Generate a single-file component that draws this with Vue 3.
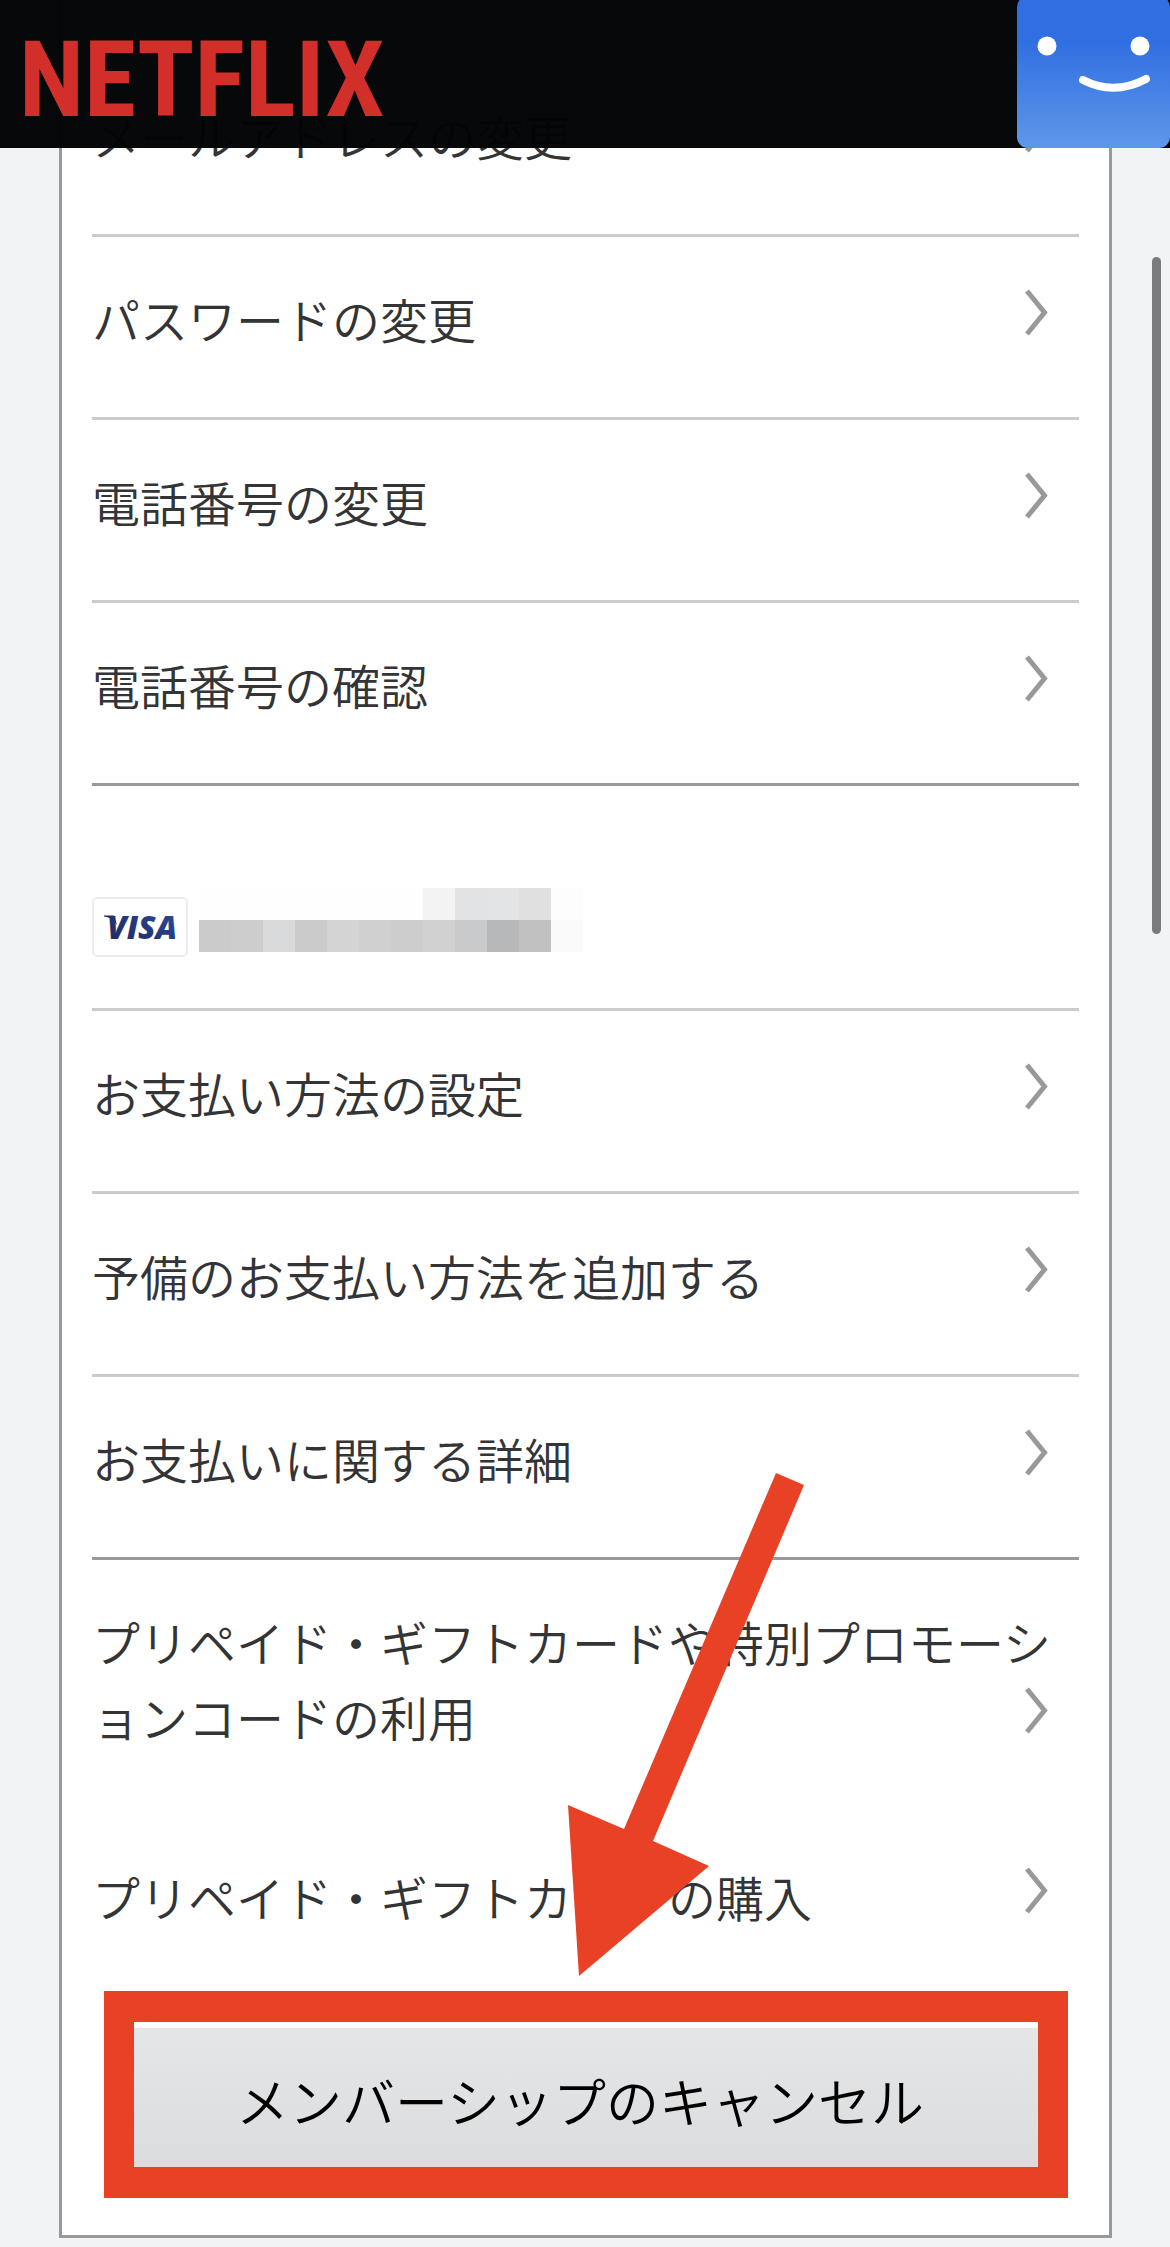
<template>
  <div class="page">
    <header class="header">
      <a href="#" class="logo">NETFLIX</a>
      <button type="button" class="avatar" aria-label="プロフィール">
        <svg viewBox="0 0 153 148" aria-hidden="true">
          <defs>
            <linearGradient id="avatar-fill" x1="0" y1="0" x2="0" y2="1">
              <stop offset="0.3" stop-color="#306fe1" />
              <stop offset="1" stop-color="#5f97e9" />
            </linearGradient>
          </defs>
          <rect y="-4" width="153" height="152" rx="11" fill="url(#avatar-fill)" />
          <circle cx="30" cy="46" r="9.5" fill="#fff" />
          <circle cx="123" cy="46" r="9.5" fill="#fff" />
          <path d="M66 80 Q97 96 129 79" fill="none" stroke="#fff" stroke-width="8" stroke-linecap="round" />
        </svg>
      </button>
    </header>

    <main class="card">
      <ul class="group">
        <li v-for="item in accountLinks" :key="item" class="row">
          <a href="#" class="row-link">
            <span>{{ item }}</span>
            <svg class="chevron" viewBox="0 0 23 47" aria-hidden="true">
              <path d="M2 2 L19.500 23.500 L2 45" />
            </svg>
          </a>
        </li>
      </ul>

      <div class="payment">
        <svg class="visa" viewBox="0 0 96 60" role="img" aria-label="VISA">
          <defs>
            <linearGradient id="visa-fill" x1="0" y1="1" x2="1" y2="0">
              <stop offset="0" stop-color="#20255b" />
              <stop offset="1" stop-color="#2a4e9c" />
            </linearGradient>
          </defs>
          <rect x="1" y="1" width="94" height="58" rx="4" fill="#fff" stroke="#e6e6e8" stroke-width="1.500" />
          <path d="M12 18.500 H22 L25 28 Q20 20 12 19.500 Z" fill="#20255b" />
          <text x="50" y="42" class="visa-text" text-anchor="middle" fill="url(#visa-fill)">VISA</text>
        </svg>
        <div class="mosaic">
          <span
            v-for="(color, index) in mosaic"
            :key="index"
            :style="{ backgroundColor: color }"
          ></span>
        </div>
      </div>

      <ul class="group">
        <li v-for="item in paymentLinks" :key="item" class="row">
          <a href="#" class="row-link">
            <span>{{ item }}</span>
            <svg class="chevron" viewBox="0 0 23 47" aria-hidden="true">
              <path d="M2 2 L19.500 23.500 L2 45" />
            </svg>
          </a>
        </li>
      </ul>

      <ul class="group plain">
        <li v-for="item in giftLinks" :key="item" class="row">
          <a href="#" class="row-link">
            <span>{{ item }}</span>
            <svg class="chevron" viewBox="0 0 23 47" aria-hidden="true">
              <path d="M2 2 L19.500 23.500 L2 45" />
            </svg>
          </a>
        </li>
      </ul>

      <div class="highlight">
        <button type="button" class="cancel">メンバーシップのキャンセル</button>
        <svg class="arrow" viewBox="0 0 236 503" aria-hidden="true">
          <path d="M208 0 L236 12 L85 368 L141 393 L11 503 L0 332 L56 356 Z" fill="#e94126" />
        </svg>
      </div>
    </main>

    <div class="scrollbar"></div>
  </div>
</template>

<script setup>
const accountLinks = [
  'メールアドレスの変更',
  'パスワードの変更',
  '電話番号の変更',
  '電話番号の確認'
];

const paymentLinks = [
  'お支払い方法の設定',
  '予備のお支払い方法を追加する',
  'お支払いに関する詳細'
];

const giftLinks = [
  'プリペイド・ギフトカードや特別プロモーションコードの利用',
  'プリペイド・ギフトカードの購入'
];

// masked card number, 12 cells per line
const mosaic = [
  '#fefefe', '#fefefe', '#fefefe', '#fefefe', '#fefefe', '#fefefe',
  '#fefefe', '#f3f3f3', '#e1e3e4', '#e2e4e5', '#e0e0e0', '#fdfdfd',
  '#cbcbcb', '#cdcdcd', '#d9dadc', '#cbcbcb', '#d4d4d4', '#d0d0d0',
  '#cdcdcd', '#d1d1d1', '#c9cacc', '#b7b8ba', '#c1c1c1', '#fafafa'
];
</script>

<style>
body {
  background: #f1f3f5;
}
</style>

<style scoped>
.page {
  position: relative;
  padding: 0 58px 9px 59px;
  font-family: "Noto Sans CJK JP", sans-serif;
  font-weight: 350;
  color: #333436;
}

.header {
  position: absolute;
  top: 0;
  left: 0;
  right: 0;
  z-index: 2;
  display: flex;
  justify-content: space-between;
  height: 148px;
  background: rgba(2, 3, 5, 0.98);
}

.logo {
  padding-left: 19px;
  font-family: "Roboto Condensed", "Liberation Sans Narrow", "DejaVu Sans Condensed", sans-serif;
  font-size: 106px;
  font-weight: 700;
  line-height: 160px;
  color: #d22f2a;
  text-decoration: none;
}

.avatar {
  width: 153px;
  padding: 0;
  border: 0;
  background: none;
}

.avatar svg {
  display: block;
}

.card {
  padding: 51px 30px 37px;
  border: 3px solid #98999b;
  border-top: 0;
  background: #fff;
}

.group {
  margin: 0;
  padding: 0;
  list-style: none;
}

.row {
  border-top: 3px solid #cacbcd;
}

.group:not(.plain) .row:last-child {
  border-bottom: 3px solid #98999b;
}

.plain .row {
  border: 0;
}

.row-link {
  display: block;
  position: relative;
  padding: 44px 0 61px;
  font-size: 48px;
  line-height: 75px;
  color: inherit;
  text-decoration: none;
}

.chevron {
  position: absolute;
  right: 31px;
  bottom: 81px;
  width: 23px;
  height: 47px;
  fill: none;
  stroke: #98999b;
  stroke-width: 5px;
}

.payment {
  display: flex;
  align-items: flex-end;
  gap: 11px;
  padding: 102px 0 51px;
}

.visa {
  width: 96px;
  height: 60px;
}

.visa-text {
  font-family: "Open Sans", "Liberation Sans", sans-serif;
  font-size: 32px;
  font-style: italic;
  font-weight: 800;
}

.mosaic {
  display: grid;
  grid-template-columns: repeat(12, 32px);
  grid-auto-rows: 32px;
  margin-bottom: 5px;
}

.highlight {
  position: relative;
  margin: -4px 11px 0 12px;
  padding-top: 6px;
  border: solid #e94126;
  border-width: 31px 30px;
}

.cancel {
  display: block;
  width: 100%;
  height: 139px;
  padding: 4px 12px 0 0;
  border: 0;
  background: linear-gradient(#e5e6e8, #dbdcde);
  font-family: inherit;
  font-size: 53px;
  font-weight: inherit;
  color: #000;
}

.arrow {
  position: absolute;
  left: calc(50% - 18px);
  bottom: calc(100% + 46px);
  width: 236px;
  height: 503px;
}

.scrollbar {
  position: absolute;
  top: 257px;
  right: 9px;
  width: 9px;
  height: 677px;
  border-radius: 5px;
  background: #7a7b7d;
}
</style>
